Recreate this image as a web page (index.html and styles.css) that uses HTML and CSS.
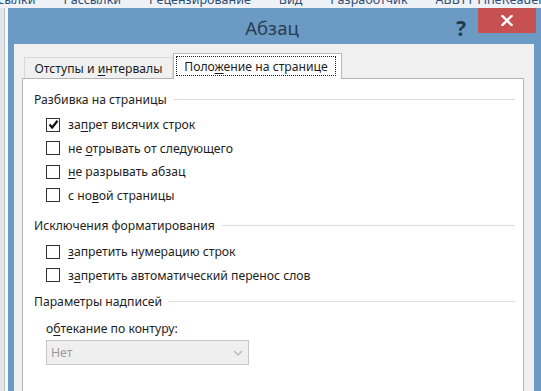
FILE: index.html
```html
<!DOCTYPE html>
<html lang="ru">
<head>
  <meta charset="UTF-8" />
  <title>Абзац</title>
  <link rel="stylesheet" href="styles.css">
</head>
<body>

  <!-- Ribbon behind the dialog -->
  <div class="ribbon">
    <div class="ribbon-tabs">
      <span class="first">ссылки</span>
      <span>Рассылки</span>
      <span>Рецензирование</span>
      <span>Вид</span>
      <span>Разработчик</span>
      <span>ABBYY FineReader</span>
    </div>
  </div>

  <div class="workspace">
    <div class="side"></div>

    <!-- Dialog -->
    <div class="dialog">
      <div class="titlebar">
        <div class="title">Абзац</div>
        <div class="controls">
          <span class="help">?</span>
          <span class="close">
            <svg width="12" height="11" viewBox="0 0 12 11">
              <path d="M1.5 1 L10.5 10 M10.5 1 L1.5 10" stroke="#fff" stroke-width="2.4" stroke-linecap="square"/>
            </svg>
          </span>
        </div>
      </div>

      <div class="client">
        <div class="tabs">
          <div class="tab"><span>Отступы и <u>и</u>нтервалы</span></div>
          <div class="tab active"><span class="focus"><span>Поло<u>ж</u>ение на странице</span></span></div>
        </div>

        <div class="panel">
          <div class="group-title"><span>Разбивка на страницы</span></div>
          <div class="check">
            <span class="box">
              <svg width="11" height="11" viewBox="0 0 11 11">
                <path d="M1.5 5.5 L4.2 8.5 L9.5 1.8" fill="none" stroke="#111" stroke-width="2.2"/>
              </svg>
            </span>
            <span>за<u>п</u>рет висячих строк</span>
          </div>
          <div class="check"><span class="box"></span><span>не <u>о</u>трывать от следующего</span></div>
          <div class="check"><span class="box"></span><span><u>н</u>е разрывать абзац</span></div>
          <div class="check"><span class="box"></span><span>с но<u>в</u>ой страницы</span></div>

          <div class="group-title second"><span>Исключения форматирования</span></div>
          <div class="check"><span class="box"></span><span><u>з</u>апретить нумерацию строк</span></div>
          <div class="check"><span class="box"></span><span>з<u>а</u>претить автоматический перенос слов</span></div>

          <div class="group-title third"><span>Параметры надписей</span></div>
          <div class="field-label">о<u>б</u>текание по контуру:</div>
          <div class="select">
            <span class="select-value">Нет</span>
            <span class="select-arrow">
              <svg width="10" height="6" viewBox="0 0 10 6">
                <path d="M1 1 L5 5 L9 1" fill="none" stroke="#b4b4b4" stroke-width="1.2"/>
              </svg>
            </span>
          </div>
        </div>
      </div>
    </div>
  </div>

</body>
</html>
```

FILE: styles.css
```css
* {
  box-sizing: border-box;
  margin: 0;
  padding: 0;
}

body {
  font-family: 'Noto Sans', sans-serif;
  font-size: 12.2px;
  color: #1e1e1e;
  background: #eef2f6;
  overflow: hidden;
  height: 391px;
}

u {
  text-underline-offset: 2px;
  text-decoration-thickness: 1px;
}

/* ribbon strip behind dialog */
.ribbon {
  height: 8px;
  overflow: hidden;
  background: #eef2f6;
}

.ribbon-tabs {
  display: flex;
  gap: 28px;
  margin-top: -9px;
  line-height: 17px;
  font-size: 12.5px;
  color: #2f4f78;
  white-space: nowrap;
}

.ribbon-tabs .first {
  margin-left: -8px;
}

.workspace {
  display: flex;
  height: 400px;
}

.side {
  width: 8px;
  flex-shrink: 0;
  background: linear-gradient(90deg, #e3e7ec 0 4px, #b9c0c8 4px 5px, #f7f8fa 5px);
}

/* dialog window */
.dialog {
  flex: 1;
  display: flex;
  flex-direction: column;
  background: #6b9bc4;
}

.titlebar {
  height: 36px;
  display: grid;
  grid-template-columns: 1fr auto 1fr;
  padding-right: 5px;
}

.title {
  grid-column: 2;
  font-size: 18.5px;
  color: #2b3d52;
  line-height: 36px;
  padding-top: 2px;
}

.controls {
  grid-column: 3;
  justify-self: end;
  display: flex;
  align-items: flex-start;
  gap: 12px;
}

.help {
  font-size: 21px;
  font-weight: bold;
  color: #233a53;
  line-height: 24px;
  margin-top: 8px;
}

.close {
  width: 58px;
  height: 25px;
  background: #c75050;
  display: flex;
  align-items: center;
  justify-content: center;
}

.client {
  flex: 1;
  margin: 0 7px 0 6px;
  background: #f0f0f0;
  padding: 9px 10px 0 8px;
  display: flex;
  flex-direction: column;
}

/* tabs */
.tabs {
  display: flex;
  align-items: flex-end;
  margin-left: 2px;
  margin-bottom: -1px;
  position: relative;
  z-index: 1;
  line-height: 17px;
  white-space: nowrap;
}

.tab {
  width: 149px;
  height: 21px;
  margin-bottom: 1px;
  border: 1px solid #d9d9d9;
  border-bottom: none;
  background: #f0f0f0;
  display: flex;
  align-items: center;
  justify-content: center;
  padding-top: 1px;
}

.tab.active {
  width: 169px;
  height: 26px;
  margin-bottom: 0;
  background: #fff;
  border-color: #b9b9b9;
  padding: 2px 5px 3px 2px;
  align-items: stretch;
}

.focus {
  flex: 1;
  border: 1px dotted #222;
  display: flex;
  align-items: center;
  justify-content: center;
}

/* tab page */
.panel {
  flex: 1;
  background: #fff;
  border: 1px solid #b4b4b4;
  padding: 12px 8px 0 11px;
}

.group-title {
  display: flex;
  align-items: center;
  gap: 7px;
  line-height: 17px;
  margin-bottom: 5px;
}

.group-title::after {
  content: '';
  flex: 1;
  height: 1px;
  background: #dcdcdc;
}

.group-title.second {
  margin-top: 10px;
  margin-bottom: 6px;
}

.group-title.third {
  margin-top: 6px;
  margin-bottom: 10px;
}

.check {
  height: 23.5px;
  display: flex;
  align-items: center;
  padding-left: 12px;
  gap: 8px;
  line-height: 17px;
}

.box {
  width: 14px;
  height: 14px;
  border: 1px solid #333;
  background: #fff;
  display: flex;
  align-items: center;
  justify-content: center;
}

.field-label {
  padding-left: 12px;
  line-height: 17px;
  margin-bottom: 3px;
}

.select {
  margin-left: 12px;
  width: 203px;
  height: 25px;
  border: 1px solid #c8c8c8;
  background: #efefef;
  display: flex;
  align-items: center;
}

.select-value {
  flex: 1;
  padding-left: 4px;
  color: #9a9a9a;
}

.select-arrow {
  width: 20px;
  align-self: stretch;
  display: flex;
  align-items: center;
  justify-content: center;
}
```
